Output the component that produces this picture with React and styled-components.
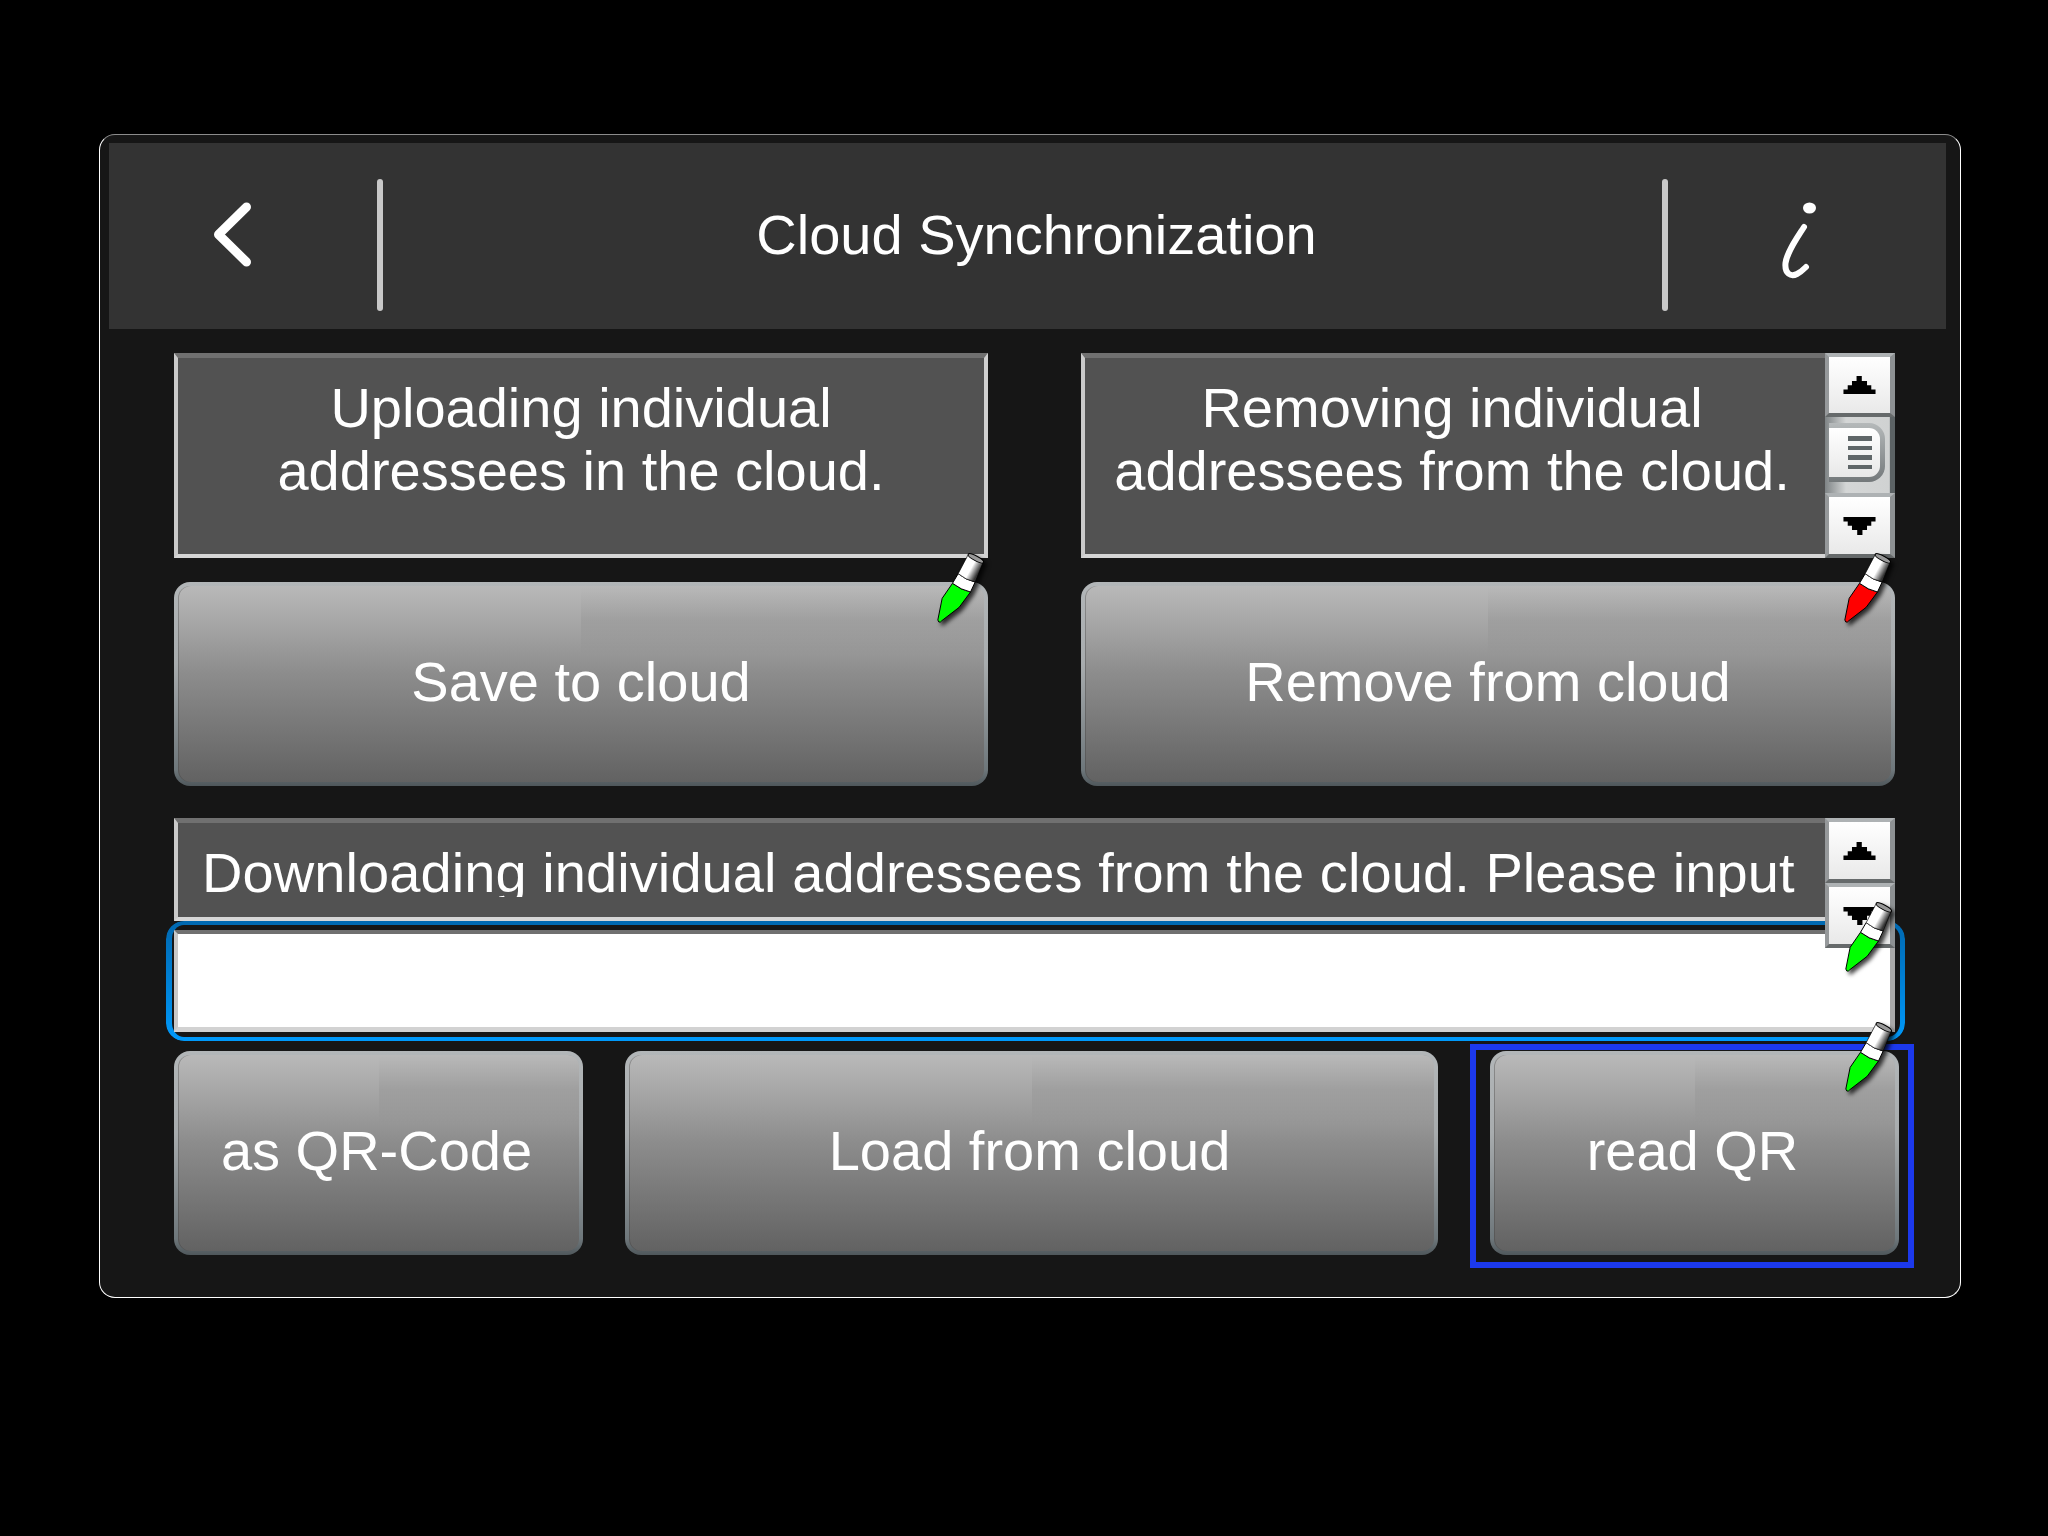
// Cloud Synchronization panel
import styled, { createGlobalStyle } from 'styled-components'

const GlobalStyle = createGlobalStyle`
  html, body {
    margin: 0;
    background: #000;
  }
  body {
    font-family: "Liberation Sans", Arial, sans-serif;
    color: #fff;
  }
`

const Page = styled.div`
  width: 2048px;
  height: 1536px;
  box-sizing: border-box;
  padding: 134px 0 0 99px;
  background: #000;
`

const Panel = styled.div`
  position: relative;
  width: 1862px;
  height: 1164px;
  box-sizing: border-box;
  padding: 8px 14px 0 9px;
  background: #161616;
  border: 1px solid #fff;
  border-top-color: #8c8c8c;
  border-radius: 16px;
`

const Header = styled.header`
  display: flex;
  align-items: center;
  height: 186px;
  background: #333;
`

const BackCell = styled.div`
  display: flex;
  align-items: center;
  width: 268px;
  padding: 0 0 4px 104px;
  box-sizing: border-box;
`

const InfoCell = styled.div`
  display: flex;
  align-items: center;
  width: 278px;
  padding: 9px 0 0 114px;
  box-sizing: border-box;
`

const Divider = styled.div`
  width: 6px;
  height: 132px;
  margin-top: 18px;
  border-radius: 3px;
  background: #c8c8c8;
`

const Title = styled.h1`
  flex: 1;
  margin: 0;
  padding: 0 0 2px 28px;
  text-align: center;
  font-size: 56px;
  font-weight: 400;
  line-height: 64px;
`

const Content = styled.main`
  width: 1721px;
  margin: 24px 0 0 65px;
`

const TopGrid = styled.section`
  display: grid;
  grid-template-columns: 814px 814px;
  grid-template-rows: 205px 204px;
  column-gap: 93px;
  row-gap: 24px;
`

const TextBox = styled.div`
  flex: 1;
  min-width: 0;
  box-sizing: border-box;
  padding-top: 19px;
  background: #525252;
  border-style: solid;
  border-width: 5px 4px 4px 4px;
  border-color: #707070 #d0d0d0 #d6d6d6 #cacaca;
  text-align: center;
  font-size: 56px;
  line-height: 62.5px;
`

const ScrollBox = styled.div`
  display: flex;
  min-width: 0;
`

const BoxWithBar = styled(TextBox)`
  padding-right: 6px;
  border-right-width: 0;
`

const ScrollBar = styled.div`
  display: flex;
  flex-direction: column;
  flex: 0 0 70px;
`

const ScrollButton = styled.div`
  display: flex;
  align-items: center;
  justify-content: center;
  height: ${(p) => p.$height}px;
  box-sizing: border-box;
  border-style: solid;
  border-width: 4px 5px 4px 4px;
  border-color: #aeb2b4 #8d9193 #666a6b #96999b;
  background: linear-gradient(#fff, #e9e9e9);
`

const Arrow = styled.svg`
  display: block;
  width: 33px;
  height: 18px;
  transform: ${(p) => (p.$down ? 'rotate(180deg)' : 'none')};
`

const Track = styled.div`
  display: flex;
  height: 76px;
  box-sizing: border-box;
  padding: 6px 10px 11px 4px;
  background: linear-gradient(90deg, #7f8486 0, #d4d6d6 30%, #d0d2d2 92%, #5c6365 93%);
`

const Thumb = styled.div`
  display: flex;
  flex: 1;
  flex-direction: column;
  align-items: center;
  justify-content: center;
  gap: 5px;
  padding-left: 10px;
  background: linear-gradient(#fff, #e8e8e8) padding-box, linear-gradient(#b5b9ba, #73787a) border-box;
  border: 5px solid transparent;
  border-left-width: 0;
  border-radius: 0 16px 16px 0;
`

const Grip = styled.span`
  display: block;
  width: 24px;
  height: 4.5px;
  background: #5f6668;
`

const ButtonFace = styled.button`
  position: relative;
  display: flex;
  align-items: center;
  justify-content: center;
  box-sizing: border-box;
  padding: 0 0 6px;
  font-family: inherit;
  font-size: 56px;
  color: #fff;
  background:
    linear-gradient(#b9b9b9 0, #8c8c8c 45%, #626262 100%) padding-box,
    linear-gradient(#b2b6b8 0, #a8acae 40%, #6e777b 92%, #4f575b 100%) border-box;
  border: 4px solid transparent;
  border-radius: 16px;
  box-shadow: inset 1px 0 0 rgba(60, 60, 60, 0.35);

  &::before {
    content: '';
    position: absolute;
    left: 50%;
    right: 0;
    top: 0;
    height: 35%;
    background: linear-gradient(rgba(0, 0, 0, 0), rgba(0, 0, 0, 0.05) 50%, rgba(0, 0, 0, 0));
  }
`

const ButtonLabel = styled.span`
  position: relative;
`

const DownloadSection = styled.section`
  position: relative;
  margin-top: 32px;
`

const DownloadLine = styled.div`
  height: 103px;
  width: 1651px;
  box-sizing: border-box;
  padding-top: 19px;
  background: #525252;
  border-style: solid;
  border-width: 5px 0 4px 4px;
  border-color: #707070 #d0d0d0 #d6d6d6 #cacaca;
`

const ClippedText = styled.div`
  height: 55px;
  padding-left: 24px;
  overflow: hidden;
  white-space: nowrap;
  font-size: 56px;
  line-height: 62px;
  letter-spacing: 0.08px;
`

const FloatingBar = styled(ScrollBar)`
  position: absolute;
  top: 0;
  right: 0;
  z-index: 3;
  width: 70px;
`

const InputWrap = styled.div`
  position: relative;
  margin-top: 9px;

  &::before {
    content: '';
    position: absolute;
    inset: -9px -10px -9px -8px;
    box-sizing: border-box;
    padding: 4px 5px 4px 6px;
    border-radius: 18px;
    background: linear-gradient(#0068b0, #0099fa);
    mask: linear-gradient(#000 0 0) content-box exclude, linear-gradient(#000 0 0);
  }
`

const AddressInput = styled.input`
  display: block;
  position: relative;
  width: 100%;
  height: 102px;
  box-sizing: border-box;
  padding: 0 10px;
  background: #fff;
  border-style: solid;
  border-width: 4px 5px 5px 4px;
  border-color: #707070 #a9a9a9 #d2d2d2 #c8c8c8;
  outline: none;
`

const ButtonRow = styled.div`
  display: flex;
  height: 204px;
  margin-top: 19px;
`

const RowButton = styled(ButtonFace)`
  flex: 0 0 ${(p) => p.$width}px;
  margin-left: ${(p) => p.$gap || 0}px;
  padding-right: 4px;
`

const SelectedFrame = styled.span`
  position: absolute;
  inset: -11px -19px -17px -24px;
  border: 6px solid #1c39ec;
  pointer-events: none;
`

const PenMark = styled.svg`
  position: absolute;
  z-index: 4;
  top: ${(p) => p.$top}px;
  right: ${(p) => p.$right}px;
  width: 57px;
  height: 80px;
  filter: drop-shadow(3px 3px 2px rgba(0, 0, 0, 0.75));
  pointer-events: none;
`

const UP_POINTS = '40,0 56,0 56,15 72,15 72,28 85,28 85,41 98,41 98,55 0,55 0,41 13,41 13,28 26,28 26,15 40,15'

const ScrollArrow = ({ down }) => (
  <Arrow viewBox="0 0 98 55" $down={down}>
    <polygon points={UP_POINTS} fill="#000" />
  </Arrow>
)

const Pen = ({ color, id, top, right }) => (
  <PenMark viewBox="100 60 170 240" $top={top} $right={right}>
    <defs>
      <linearGradient id={id} x1="190" y1="95" x2="238" y2="122" gradientUnits="userSpaceOnUse">
        <stop offset="0" stopColor="#fff" />
        <stop offset="0.55" stopColor="#fff" />
        <stop offset="1" stopColor="#333" />
      </linearGradient>
    </defs>
    <path d="M117 276 L114 270 L127 205 L158 160 Q184 180 212 186 L178 232 L126 272 Q122 278 117 276 Z" fill={color} stroke="#000" strokeWidth="3" strokeLinejoin="round" />
    <path d="M158 160 L175 131 Q198 150 226 156 L212 186 Q184 180 158 160 Z" fill="#fff" stroke="#000" strokeWidth="3" strokeLinejoin="round" />
    <path d="M175 131 L205 74 L250 97 L226 156 Q198 150 175 131 Z" fill={`url(#${id})`} stroke="#000" strokeWidth="2" strokeLinejoin="round" />
    <ellipse cx="228" cy="85" rx="26" ry="7" transform="rotate(28 228 85)" fill="#999" stroke="#000" strokeWidth="3" />
  </PenMark>
)

const App = () => {
  return (
    <Page>
      <GlobalStyle />
      <Panel>
        <Header>
          <BackCell>
            <svg width="38" height="65" viewBox="0 0 38 65">
              <polyline points="33.5,5 5.5,32.5 33.5,60" fill="none" stroke="#fff" strokeWidth="9" strokeLinecap="round" strokeLinejoin="round" />
            </svg>
          </BackCell>
          <Divider />
          <Title>Cloud Synchronization</Title>
          <Divider />
          <InfoCell>
            <svg width="36" height="78" viewBox="0 0 36 78">
              <ellipse cx="27.5" cy="6" rx="6.5" ry="5.5" fill="#fff" />
              <path d="M22 25 C15 36 5 50 3.5 61 C2.5 72 9 75 15 72 C19 70 22 67 24 65" fill="none" stroke="#fff" strokeWidth="6" strokeLinecap="round" />
            </svg>
          </InfoCell>
        </Header>

        <Content>
          <TopGrid>
            <TextBox>
              Uploading individual
              <br />
              addressees in the cloud.
            </TextBox>
            <ScrollBox>
              <BoxWithBar>
                Removing individual
                <br />
                addressees from the cloud.
              </BoxWithBar>
              <ScrollBar>
                <ScrollButton $height={64}>
                  <ScrollArrow />
                </ScrollButton>
                <Track>
                  <Thumb>
                    <Grip />
                    <Grip />
                    <Grip />
                    <Grip />
                  </Thumb>
                </Track>
                <ScrollButton $height={65}>
                  <ScrollArrow down />
                </ScrollButton>
              </ScrollBar>
            </ScrollBox>
            <ButtonFace>
              <ButtonLabel>Save to cloud</ButtonLabel>
              <Pen color="#00ff00" id="pen-save" top={-36} right={-6} />
            </ButtonFace>
            <ButtonFace>
              <ButtonLabel>Remove from cloud</ButtonLabel>
              <Pen color="#ff0000" id="pen-remove" top={-36} right={-6} />
            </ButtonFace>
          </TopGrid>

          <DownloadSection>
            <DownloadLine>
              <ClippedText>Downloading individual addressees from the cloud. Please input</ClippedText>
            </DownloadLine>
            <FloatingBar>
              <ScrollButton $height={65}>
                <ScrollArrow />
              </ScrollButton>
              <ScrollButton $height={65}>
                <ScrollArrow down />
              </ScrollButton>
            </FloatingBar>
            <InputWrap>
              <AddressInput />
              <Pen color="#00ff00" id="pen-input" top={-31} right={-3} />
            </InputWrap>
            <ButtonRow>
              <RowButton $width={409}>
                <ButtonLabel>as QR-Code</ButtonLabel>
              </RowButton>
              <RowButton $width={813} $gap={42}>
                <ButtonLabel>Load from cloud</ButtonLabel>
              </RowButton>
              <RowButton $width={409} $gap={52}>
                <ButtonLabel>read QR</ButtonLabel>
                <SelectedFrame />
                <Pen color="#00ff00" id="pen-qr" top={-36} right={-3} />
              </RowButton>
            </ButtonRow>
          </DownloadSection>
        </Content>
      </Panel>
    </Page>
  )
}

export default App
